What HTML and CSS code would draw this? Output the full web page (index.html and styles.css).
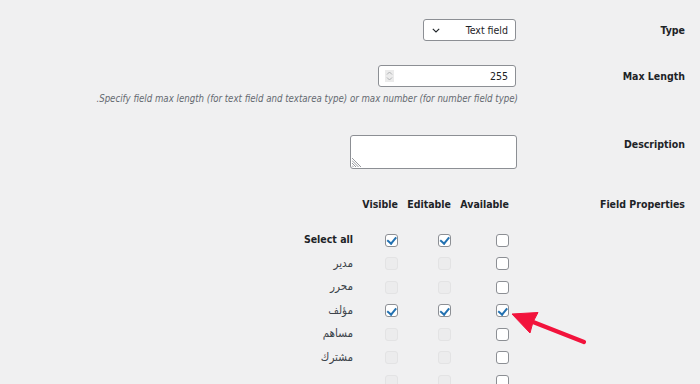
FILE: index.html
```html
<!DOCTYPE html>
<html lang="ar" dir="rtl">
<head>
<meta charset="utf-8">
<title>Field settings</title>
<link rel="stylesheet" href="styles.css">
</head>
<body>
<div class="form">
  <div class="row row-type">
    <div class="label">Type</div>
    <div class="field">
      <div class="select">
        <span class="select-text">Text field</span>
        <svg class="chev" width="8" height="5" viewBox="0 0 8 5"><path d="M0.8 0.8 L4 4 L7.2 0.8" fill="none" stroke="#1d2327" stroke-width="1.1"/></svg>
      </div>
    </div>
  </div>

  <div class="row row-max">
    <div class="label">Max Length</div>
    <div class="field">
      <div class="number">
        <span class="number-text">255</span>
        <span class="spin">
          <svg width="9" height="12" viewBox="0 0 9 12"><path d="M2 4.5 L4.5 2 L7 4.5 M2 7.5 L4.5 10 L7 7.5" fill="none" stroke="#a7aaad" stroke-width="0.9"/></svg>
        </span>
      </div>
      <p class="desc">Specify field max length (for text field and textarea type) or max number (for number field type).</p>
    </div>
  </div>

  <div class="row row-desc">
    <div class="label">Description</div>
    <div class="field">
      <div class="textarea">
        <svg class="grip" width="10" height="10" viewBox="0 0 10 10"><path d="M0 1 L9 10 M0 3.5 L6.5 10 M0 6 L4 10 M0 8.5 L1.5 10" stroke="#8c8f94" stroke-width="0.9"/></svg>
      </div>
    </div>
  </div>

  <div class="row row-props">
    <div class="label props-label">Field Properties</div>
    <div class="field">
      <div class="perm">
        <div class="ph"></div>
        <div class="ph">Visible</div>
        <div class="ph">Editable</div>
        <div class="ph">Available</div>

        <div class="role strong">Select all</div>
        <div class="cell"><span class="cb on"></span></div>
        <div class="cell"><span class="cb on"></span></div>
        <div class="cell"><span class="cb"></span></div>

        <div class="role"><span dir="rtl">مدير</span></div>
        <div class="cell"><span class="cb off"></span></div>
        <div class="cell"><span class="cb off"></span></div>
        <div class="cell"><span class="cb"></span></div>

        <div class="role"><span dir="rtl">محرر</span></div>
        <div class="cell"><span class="cb off"></span></div>
        <div class="cell"><span class="cb off"></span></div>
        <div class="cell"><span class="cb"></span></div>

        <div class="role"><span dir="rtl">مؤلف</span></div>
        <div class="cell"><span class="cb on"></span></div>
        <div class="cell"><span class="cb on"></span></div>
        <div class="cell"><span class="cb on"></span></div>

        <div class="role"><span dir="rtl">مساهم</span></div>
        <div class="cell"><span class="cb off"></span></div>
        <div class="cell"><span class="cb off"></span></div>
        <div class="cell"><span class="cb"></span></div>

        <div class="role"><span dir="rtl">مشترك</span></div>
        <div class="cell"><span class="cb off"></span></div>
        <div class="cell"><span class="cb off"></span></div>
        <div class="cell"><span class="cb"></span></div>

        <div class="role"></div>
        <div class="cell"><span class="cb off"></span></div>
        <div class="cell"><span class="cb off"></span></div>
        <div class="cell"><span class="cb"></span></div>
      </div>
    </div>
  </div>
</div>

<svg class="arrow" width="700" height="384" viewBox="0 0 700 384">
  <line x1="584" y1="342" x2="528" y2="320" stroke="#f2133c" stroke-width="4.2" stroke-linecap="round"/>
  <path d="M512 314 L538 312.5 L533 322 L530 333 Z" fill="#f2133c" stroke="#f2133c" stroke-width="1" stroke-linejoin="round"/>
</svg>
</body>
</html>
```

FILE: styles.css
```css
html, body {
  margin: 0;
  padding: 0;
}
body {
  background: #f0f0f1;
  color: #1d2327;
  font-family: "DejaVu Sans Condensed", "DejaVu Sans", sans-serif;
  font-size: 10px;
  height: 384px;
  overflow: hidden;
  position: relative;
}
.form {
  padding: 19px 15px 0 0;
}
.row {
  display: grid;
  grid-template-columns: 169px 1fr;
}
.label {
  font-weight: bold;
  text-align: right;
  font-size: 10.5px;
  line-height: 22px;
}
.row-max { margin-top: 24px; }
.row-desc { margin-top: 29px; }
.row-desc .label { line-height: 18px; }
.row-props { margin-top: 27px; }
.props-label { line-height: 16px; }

.select {
  height: 20px;
  width: 76px;
  border: 1px solid #8c8f94;
  border-radius: 3px;
  background: #fff;
  display: flex;
  align-items: center;
  justify-content: space-between;
  padding: 0 7px 0 8px;
}
.select-text, .number-text {
  font-size: 10.5px;
}
.chev { display: block; }

.number {
  width: 123px;
  height: 20px;
  border: 1px solid #8c8f94;
  border-radius: 3px;
  background: #fff;
  display: flex;
  align-items: center;
  justify-content: space-between;
  padding: 0 7px 0 6px;
}
.spin {
  width: 9px;
  height: 12px;
  background: #ebebeb;
  display: flex;
  align-items: center;
  justify-content: center;
}
.spin svg { display: block; }

.desc {
  margin: 5px -2px 0 0;
  font-style: italic;
  color: #646970;
  line-height: 14px;
  font-size: 9.6px;
  white-space: nowrap;
}

.textarea {
  width: 165px;
  height: 32px;
  border: 1px solid #8c8f94;
  border-radius: 3px;
  background: #fff;
  margin-right: -1px;
  position: relative;
}
.grip {
  position: absolute;
  left: 1px;
  bottom: 1px;
}

.perm {
  direction: ltr;
  display: grid;
  grid-template-columns: 60px 45px 53px 58px;
  grid-template-rows: 32.25px repeat(7, 23.5px);
  width: 216px;
  margin-right: 7px;
  justify-items: end;
  align-items: center;
}
.ph {
  align-self: start;
  font-weight: bold;
  font-size: 10.5px;
  line-height: 16px;
}
.role {
  text-align: right;
  color: #3c434a;
  font-size: 11.5px;
  line-height: 23.5px;
}
.role.strong {
  color: #1d2327;
  font-weight: bold;
  font-size: 10.5px;
}
.cell {
  display: flex;
  align-items: center;
}
.cb {
  display: block;
  width: 11px;
  height: 11px;
  border: 1px solid #8c8f94;
  border-radius: 3px;
  background: #fff;
  position: relative;
}
.cb.off {
  background: #ececed;
  border-color: #e3e3e4;
}
.cb.on::after {
  content: "";
  position: absolute;
  left: 3px;
  top: 0.5px;
  width: 3.5px;
  height: 6.5px;
  border-right: 2px solid #2271b1;
  border-bottom: 2px solid #2271b1;
  transform: rotate(40deg);
}
.arrow {
  position: absolute;
  left: 0;
  top: 0;
  pointer-events: none;
}
```
